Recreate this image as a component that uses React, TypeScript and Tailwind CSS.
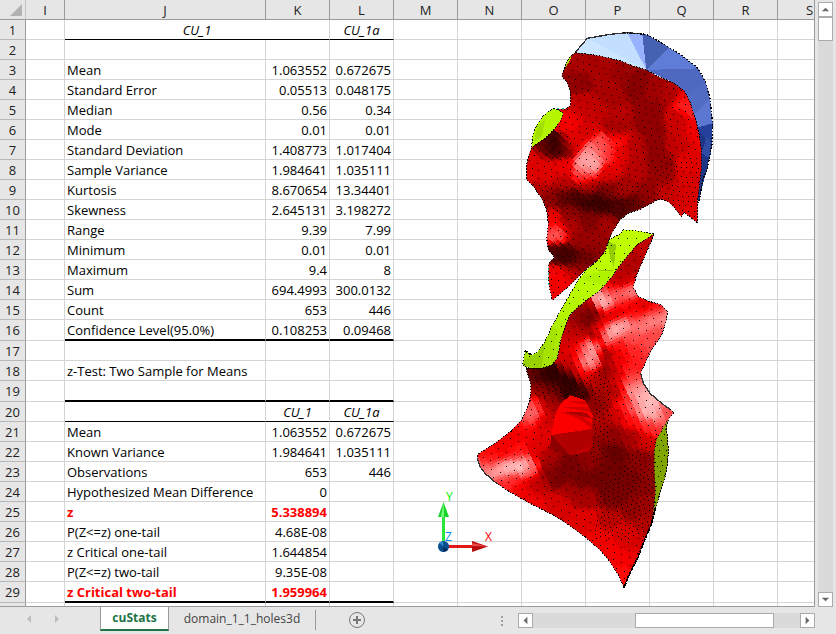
import React from "react";

type Sample = [number, number, number];
type Pt = [number, number];

const columns = ["I", "J", "K", "L", "M", "N", "O", "P", "Q", "R", "S"];

interface Row {
  label?: string;
  k?: string;
  l?: string;
  kind?: "title" | "head" | "hot";
  line?: "thin" | "thick";
}

const rows: Row[] = [
  { k: "CU_1", l: "CU_1a", kind: "title", line: "thin" },
  {},
  { label: "Mean", k: "1.063552", l: "0.672675" },
  { label: "Standard Error", k: "0.05513", l: "0.048175" },
  { label: "Median", k: "0.56", l: "0.34" },
  { label: "Mode", k: "0.01", l: "0.01" },
  { label: "Standard Deviation", k: "1.408773", l: "1.017404" },
  { label: "Sample Variance", k: "1.984641", l: "1.035111" },
  { label: "Kurtosis", k: "8.670654", l: "13.34401" },
  { label: "Skewness", k: "2.645131", l: "3.198272" },
  { label: "Range", k: "9.39", l: "7.99" },
  { label: "Minimum", k: "0.01", l: "0.01" },
  { label: "Maximum", k: "9.4", l: "8" },
  { label: "Sum", k: "694.4993", l: "300.0132" },
  { label: "Count", k: "653", l: "446" },
  { label: "Confidence Level(95.0%)", k: "0.108253", l: "0.09468", line: "thick" },
  {},
  { label: "z-Test: Two Sample for Means" },
  { line: "thick" },
  { k: "CU_1", l: "CU_1a", kind: "head", line: "thin" },
  { label: "Mean", k: "1.063552", l: "0.672675" },
  { label: "Known Variance", k: "1.984641", l: "1.035111" },
  { label: "Observations", k: "653", l: "446" },
  { label: "Hypothesized Mean Difference", k: "0" },
  { label: "z", k: "5.338894", kind: "hot" },
  { label: "P(Z<=z) one-tail", k: "4.68E-08" },
  { label: "z Critical one-tail", k: "1.644854" },
  { label: "P(Z<=z) two-tail", k: "9.35E-08" },
  { label: "z Critical two-tail", k: "1.959964", kind: "hot", line: "thick" },
  {},
];

/* Surface shading: brightness samples (0 dark, 1 red, 2 highlight) spread over each body. */
const upperSamples: Sample[] = [
  [195,185,.5],[200,130,.62],[270,140,.62],[340,160,.55],[380,185,.45],[440,200,.58],[480,210,.65],[530,260,1.15],[535,225,1],
  [550,330,.95],[300,220,.6],[200,260,.75],[420,280,.5],[500,300,.78],[500,360,.75],[320,300,.68],[250,280,.75],[230,330,.85],
  [180,300,1],[320,328,.5],[320,355,1.1],[130,385,.05],[105,388,.3],[160,385,.3],[80,420,.9],[60,460,.9],[190,370,.9],[270,375,1.3],
  [250,400,1.6],[225,440,1.65],[240,425,1.75],[290,400,1.25],[330,400,.9],[430,370,.5],[430,330,.5],[440,430,.48],[550,430,.9],
  [380,440,.68],[380,380,.68],[100,470,.9],[110,440,.9],[160,440,.95],[300,460,.9],[220,470,1.2],[160,490,.7],[450,470,.55],
  [540,480,.85],[550,580,.88],[520,540,.85],[200,535,.15],[160,530,.25],[240,545,.12],[280,555,.12],[320,563,.18],[350,572,.22],[380,565,.3],
  [120,535,.5],[300,510,.4],[420,530,.5],[470,520,.75],[330,500,.6],[230,500,.6],[90,500,.65],[140,640,1.35],[125,600,.95],
  [180,620,.65],[180,580,.5],[240,600,.42],[290,610,.6],[210,660,.55],[160,710,.1],[140,700,.2],[190,715,.2],[230,720,.3],
  [260,690,.5],[270,650,.55],[140,760,1],[130,820,1],[170,790,1],[190,760,.7],[220,740,.5],
];

const lowerSamples: Sample[] = [
  [530,90,.72],[480,130,.65],[440,180,.72],[470,180,.75],[395,245,1.8],[410,235,1.75],[480,213,1.6],[440,226,1.5],[420,210,1],[455,250,1.1],
  [350,265,.6],[370,290,.25],[355,285,.35],[330,300,.5],[310,330,.7],[300,350,.75],[440,275,.9],[490,255,.95],[520,255,.9],[560,270,1.05],
  [580,290,1.65],[550,300,1.6],[510,310,1.55],[420,335,1.85],[410,350,1.6],[460,322,1.7],[500,285,1.05],[390,320,1],[400,295,.9],[560,335,1.3],
  [530,370,1.3],[480,350,1.3],[440,375,1.05],[500,400,1.15],[450,420,.95],[480,440,1.1],[480,480,1.3],[400,400,.55],[382,350,.5],
  [310,380,.95],[290,400,.85],[368,385,1.75],[362,405,1.75],[355,430,1.6],[335,400,1.2],[300,440,.75],[345,460,.95],[280,470,.05],[240,470,.05],
  [210,465,.15],[300,495,.05],[180,460,.3],[330,515,.15],[250,500,.25],[210,510,.5],[230,530,.5],[410,460,.55],[370,480,.7],[400,510,.6],[430,520,.7],
  [440,470,.85],[195,555,1.2],[195,575,1.6],[178,595,1.4],[225,560,.65],[220,600,.8],[210,625,.9],[165,625,1],[120,650,1],[60,700,1.02],[100,700,1],
  [40,750,1.4],[60,755,1.75],[150,735,1.95],[120,740,1.85],[90,750,1.75],[180,745,1.4],[140,705,1.05],[200,690,.9],[230,720,.6],[90,790,1.15],[60,725,1.1],
  [130,775,1.2],[150,800,.98],[200,790,.75],[180,840,.95],[240,760,.45],[270,770,.38],[300,740,.4],[330,780,.35],[370,720,.5],[400,790,.33],[400,740,.35],[440,700,.3],[440,750,.35],
  [430,640,.5],[400,600,.6],[385,550,.5],[440,590,.8],[480,600,1.05],[460,550,1.1],[515,540,1.8],[495,510,1.65],[530,565,1.8],[555,580,1.75],[590,580,1.3],
  [490,560,1.4],[540,620,1.2],[520,660,.8],[480,660,.6],[500,720,.45],[540,740,.5],[480,780,.38],[430,830,.4],[520,800,.45],[350,830,.6],[300,810,.6],
  [270,850,.85],[350,900,.9],[420,900,.68],[500,870,.5],[530,850,.55],[400,960,.98],[430,1000,1],[460,1060,1.05],[480,960,.85],[520,900,.65],[450,940,.85],[470,1020,.98],
];

function levelAt(samples: Sample[], x: number, y: number) {
  let sum = 0;
  let total = 0;
  for (const [sx, sy, v] of samples) {
    const d = (sx - x) ** 2 + (sy - y) ** 2;
    const w = Math.exp(-d / 520) + 900 / (d + 500) ** 2;
    sum += v * w;
    total += w;
  }
  return sum / total;
}

function shade(level: number) {
  if (level <= 1) return `rgb(${Math.round(30 + 215 * Math.pow(level, 0.9))},0,0)`;
  const c = Math.round((level - 1) * 230);
  return `rgb(255,${c},${c})`;
}

/* Slanted facets are grouped by tone so each tone is a single path. */
function buildFacets(samples: Sample[], w: number, h: number, angle: number, long: number, short: number) {
  const tones = new Map<number, string>();
  const cos = Math.cos(angle);
  const sin = Math.sin(angle);
  const reach = Math.hypot(w, h) / 2 + 30;
  const place = (u: number, v: number): Pt => [w / 2 + u * cos - v * sin, h / 2 + u * sin + v * cos];
  for (let v = -reach; v < reach; v += short) {
    for (let u = -reach; u < reach; u += long) {
      const [cx, cy] = place(u + long / 2, v + short / 2);
      if (cx < -20 || cy < -20 || cx > w + 20 || cy > h + 20) continue;
      const tone = Math.round(Math.max(0, levelAt(samples, cx, cy)) * 26);
      const corners = [place(u, v), place(u + long + 1, v), place(u + long + 1, v + short + 1), place(u, v + short + 1)];
      const d = "M" + corners.map(([x, y]) => `${Math.round(x)} ${Math.round(y)}`).join("L") + "Z";
      tones.set(tone, (tones.get(tone) ?? "") + d);
    }
  }
  return [...tones.entries()];
}

function buildDots(w: number, h: number, angle: number, keep: (x: number, y: number) => boolean, gap: number) {
  let d = "";
  const cos = Math.cos(angle);
  const sin = Math.sin(angle);
  const n = Math.ceil(Math.hypot(w, h) / gap);
  for (let j = -n; j < n; j++) {
    for (let i = -n; i < n; i++) {
      const u = i * gap + (j % 2) * gap * 0.5 + Math.sin(j * 1.7 + i * 0.6) * 3;
      const v = j * gap * 0.85 + Math.sin(i * 0.7) * 4;
      const x = Math.round((w / 2 + u * cos - v * sin) / 3) * 3;
      const y = Math.round((h / 2 + u * sin + v * cos) / 3) * 3;
      if (x > 0 && y > 0 && x < w && y < h && keep(x, y)) d += `M${x} ${y}h3v3h-3z`;
    }
  }
  return d;
}

const upperOutline =
  "M195 98L232 102L270 108L330 122L370 138L410 150L445 170L490 188L522 212L540 245L556 295L568 345L574 390L575 440L570 480L563 540L562 608L545 595L522 577L514 590L495 565L475 545L455 538L440 541L420 552L390 568L355 580L332 598L310 630L297 660L287 690L270 715L235 742L205 770L180 795L150 822L127 840L118 800L115 750L117 728L134 712L115 690L110 663L115 610L110 570L95 535L72 502L50 478L49 440L55 410L65 380L100 330L158 280L145 268L165 268L183 255L180 210L170 185L155 168L165 140L178 112Z";

const lowerOutline =
  "M552 42L500 75L475 105L450 135L430 165L405 195L385 215L350 240L320 265L300 285L285 320L275 350L268 385L262 415L245 435L215 445L168 445L182 490L183 520L175 555L155 600L120 635L75 670L25 702L22 715L30 740L45 760L70 783L110 810L170 845L250 885L300 917L350 955L390 990L420 1025L445 1065L462 1102L475 1070L500 1020L520 970L545 910L556 865L570 820L585 770L593 730L595 690L590 630L592 602L612 577L575 550L540 520L520 490L512 460L525 430L545 390L575 345L590 300L592 275L575 255L535 243L505 230L490 200L500 165L515 130L530 95L548 55Z";

const greenBand =
  "M552 42L500 32L460 30L450 42L418 58L405 95L380 125L345 152L325 180L300 222L270 275L245 320L225 365L200 398L185 405L165 392L158 437L185 447L215 447L245 437L262 415L268 385L275 350L285 320L300 285L320 265L350 240L385 215L405 195L430 165L450 135L475 105L500 75Z";

const upperFacets = buildFacets(upperSamples, 620, 850, -0.85, 15, 9);
const lowerFacets = buildFacets(lowerSamples, 620, 1110, -0.42, 18, 8);
const inUpperDense = (x: number, y: number) => (y > 490 && y < 580 && x < 400) || (y > 690 && y < 740) || (x > 440 && y > 400);
const inLowerDense = (x: number, y: number) =>
  (x > 370 && x < 560 && y > 640 && y < 960 && x > 700 - (y - 460) * 0.9) ||
  (x > 190 && x < 380 && y > 470 && y < 530) ||
  (x > 365 && x < 415 && y > 440 && y < 720);
const upperDots =
  buildDots(620, 850, 0.3, (x, y) => !inUpperDense(x, y), 22) + buildDots(620, 850, 0.2, inUpperDense, 17);
const lowerDots =
  buildDots(620, 1110, 0.45, (x, y) => !inLowerDense(x, y), 25) + buildDots(620, 1110, -0.5, inLowerDense, 15);
const limeDots = buildDots(620, 460, 0.1, () => true, 28);
const stripDots = buildDots(620, 1110, 0, () => true, 18);

function Surfaces() {
  return (
    <svg
      className="pointer-events-none absolute left-[430px] top-5 h-[580px] w-[300px]"
      viewBox="430 20 300 580"
      shapeRendering="crispEdges"
      role="img"
      aria-label="Domain surfaces"
    >
      <defs>
        <clipPath id="upper"><path d={upperOutline} /></clipPath>
        <clipPath id="lower"><path d={lowerOutline} /></clipPath>
        <clipPath id="band"><path d={greenBand} /></clipPath>
        <clipPath id="strip"><path d="M592 602L575 632L560 657L553 690L553 750L556 810L552 860L545 912L600 870V602Z" /></clipPath>
        <linearGradient id="lime" x1="0" y1="0" x2="0" y2="1">
          <stop offset="0" stopColor="#c0ff00" />
          <stop offset="0.5" stopColor="#b8fb00" />
          <stop offset="1" stopColor="#a2dc00" />
        </linearGradient>
      </defs>

      <g transform="translate(510 20) scale(0.333333)">
        <path fill="#c2dfff" d="M195 98L232 55L300 43L352 38L410 150L330 122L270 108Z" />
        <path fill="#cde6ff" d="M195 98L232 55L400 146L330 122L270 108Z" />
        <path fill="#99b2ff" d="M352 38L397 42L409 150Z" />
        <path fill="#4661b2" d="M397 42L412 44L477 82L409 150Z" />
        <path fill="#5f7cd6" d="M477 82L520 110L564 145L409 150Z" />
        <path fill="#5069c0" d="M564 145L586 185L530 225L490 188L409 150Z" />
        <path fill="#4f69c0" d="M564 145L586 185L537 240L500 190Z" />
        <path fill="#526cc4" d="M586 185L600 235L552 285L530 225Z" />
        <path fill="#5b77cf" d="M600 235L608 310L563 322L550 285Z" />
        <path fill="#24409a" d="M563 322L608 310L606 372L590 368L568 345Z" />
        <path fill="#1c3585" d="M566 335L606 372L592 445L582 480L566 550L560 450Z" />
        <path fill="#2f4ca5" d="M590 350L606 372L600 415L575 400Z" />
        <path fill="none" stroke="#333" strokeWidth="4" d="M195 98L232 55L300 43L352 38L397 42" />
        <path fill="none" stroke="#000" strokeWidth="4" strokeDasharray="5 5" d="M340 38L397 42L412 44L477 82L520 110L564 145L586 185L600 235L608 310L606 372L592 445L578 480L566 550" />
        <g clipPath="url(#upper)">
          {upperFacets.map(([tone, d]) => <path key={tone} d={d} fill={shade(tone / 26)} />)}
          <path d={upperDots} fill="#000" />
          <path fill="#a7e600" d="M163 145L165 125L180 105L184 112L170 138Z" />
        </g>
        <path d={upperOutline} fill="none" stroke="#000" strokeWidth="3" strokeDasharray="5 4" />
        <path fill="#b4f600" stroke="#000" strokeWidth="3" strokeDasharray="5 5" d="M65 382L68 345L80 315L100 288L120 271L135 265L160 278L150 305L130 330L105 355Z" />
        <path fill="#a3e000" d="M72 365L82 318L105 300L96 350Z" />
        <path stroke="#00c8a0" strokeWidth="3" strokeDasharray="6 9" d="M140 266H162M116 745V795" />
      </g>

      <g transform="translate(470 220) scale(0.333333)">
        <path d={greenBand} fill="url(#lime)" />
        <g clipPath="url(#band)">
          <path fill="#93cc00" d="M410 62L438 74L432 140L422 118Z" />
          <path fill="#b0f300" d="M345 165L430 150L405 195L330 180Z" />
          <path fill="#b5f500" d="M290 245L345 225L300 285L265 290Z" />
          <path fill="#99d000" d="M160 420L205 400L225 365L218 445L158 440Z" />
          <path fill="#a5e300" d="M225 365L248 320L262 330L240 440H215Z" />
          <path fill="none" stroke="#93c900" strokeWidth="3" d="M385 151H428" />
          <path d={limeDots} fill="#111" />
        </g>
        <path d={greenBand} fill="none" stroke="#000" strokeWidth="3" strokeDasharray="5 4" />
        <g clipPath="url(#lower)">
          {lowerFacets.map(([tone, d]) => <path key={tone} d={d} fill={shade(tone / 26)} />)}
          <path d={lowerDots} fill="#000" />
          <path fill="#fc0000" d="M244 645L254 590L272 550L302 526L345 540L368 585L366 632Z" />
          <path fill="#d40000" d="M290 545L345 542L356 556ZM280 562L352 560L362 576ZM272 576L330 583L368 610L366 626L325 596Z" />
          <path fill="#a80000" d="M278 575L350 578L366 596Z" />
          <path fill="#b00000" d="M244 645L366 627L368 675L356 694L300 706Z" />
          <path fill="#c00000" d="M300 706L356 694L368 675L330 690Z" />
          <path fill="#8d0000" d="M244 645L300 706L240 688Z" />
        </g>
        <g clipPath="url(#strip)">
          <path fill="#80a400" clipPath="url(#lower)" d="M540 600H610V920H540Z" />
          <path fill="#000" clipPath="url(#lower)" d={stripDots} />
        </g>
        <path fill="none" stroke="#000" strokeWidth="3" strokeDasharray="4 8" d="M592 602L575 632L560 657L553 690L553 750L556 810L552 860" />
        <path d={lowerOutline} fill="none" stroke="#000" strokeWidth="3" strokeDasharray="5 4" />
        <path fill="none" stroke="#333" strokeWidth="4" d="M22 715L30 740L45 760L82 792M512 460L520 490L540 520L575 550L600 568" />
        <path fill="none" stroke="#000" strokeWidth="5" strokeDasharray="9 3" d="M556 865L545 910L520 970L500 1020L475 1070L462 1104M165 392L185 405" />
      </g>

      <g shapeRendering="auto">
        <path stroke="#27e83a" strokeWidth="3" d="M443.500 516V542" />
        <path fill="#18d52c" d="M443.500 502L438 517H449Z" />
        <path fill="#7dff80" d="M443.500 502L441 517H444Z" />
        <path stroke="#e01818" strokeWidth="3" d="M448 546.500H473" />
        <path fill="#b80c0c" d="M488 546.500L472 541V552Z" />
        <path fill="#ed4a4a" d="M488 546.500L472 543V546Z" />
        <circle cx="443.500" cy="546.500" r="5.500" fill="#0a4f90" />
        <path fill="#2d86d1" d="M443.500 546.500L439 543L443 541Z" />
        <path fill="#06305c" d="M443.500 546.500L448 550L443 552Z" />
        <text x="446" y="501" className="fill-[#00f000] font-['Open_Sans',sans-serif] text-[12px]">Y</text>
        <text x="445" y="541" className="fill-[#0088ff] font-['Open_Sans',sans-serif] text-[12px]">Z</text>
        <text x="485" y="541" className="fill-[#f00000] font-['Open_Sans',sans-serif] text-[12px]">X</text>
      </g>
    </svg>
  );
}

function SheetRow({ row, index }: { row: Row; index: number }) {
  const { label, k, l, kind, line } = row;
  const height = line === "thick" ? "h-[21px]" : "h-5";
  const edge =
    line === "thick"
      ? "border-b-2 border-b-black"
      : line === "thin"
        ? "border-b border-b-black"
        : "border-b border-b-[#d4d4d4]";
  const tone = kind === "hot" ? "font-bold text-[#ff0000]" : "";
  const cell = "whitespace-nowrap border-r border-r-[#d4d4d4] p-0 leading-[18px]";
  const plain = `${cell} border-b border-b-[#d4d4d4]`;
  const value = kind === "title" || kind === "head" ? "text-center italic" : "pr-0.5 text-right";
  return (
    <tr className={height}>
      <th scope="row" className="border-b border-r border-b-[#b8b8b8] border-r-[#9b9b9b] bg-[#e6e6e6] p-0 text-center font-normal leading-[18px] text-[#222]">
        {index <= 29 ? index : ""}
      </th>
      <td className={plain} />
      {kind === "title" ? (
        <td colSpan={2} className={`${cell} ${edge} ${value}`}>{k}</td>
      ) : (
        <>
          <td className={`${cell} ${edge} ${tone} pl-0.5`}>{label}</td>
          <td className={`${cell} ${edge} ${tone} ${value}`}>{k}</td>
        </>
      )}
      <td className={`${cell} ${edge} ${value}`}>{l}</td>
      {columns.slice(4).map((c) => <td key={c} className={plain} />)}
    </tr>
  );
}

function Arrow({ dir, label }: { dir: "up" | "down" | "left" | "right"; label: string }) {
  const shapes = { up: "M3 9L7 5L11 9Z", down: "M3 5L7 9L11 5Z", left: "M9 3L5 7L9 11Z", right: "M5 3L9 7L5 11Z" };
  return (
    <button aria-label={label} className="size-[15px] shrink-0 border border-[#ababab] bg-white">
      <svg viewBox="0 0 14 14" className="size-full fill-[#6a6a6a]"><path d={shapes[dir]} /></svg>
    </button>
  );
}

export default function App() {
  return (
    <div className="flex h-screen flex-col overflow-hidden bg-[#e6e6e6] font-['Open_Sans','Noto_Sans',sans-serif] text-[13px] text-black">
      <div className="flex min-h-0 flex-1">
        <main className="relative min-w-0 flex-1 overflow-hidden border-b border-r border-[#9b9b9b] bg-white">
          <table className="w-[842px] table-fixed border-separate border-spacing-0">
            <colgroup>
              <col className="w-[26px]" />
              <col className="w-[39px]" />
              <col className="w-[201px]" />
              {columns.slice(2).map((c) => <col key={c} className="w-16" />)}
            </colgroup>
            <thead>
              <tr className="h-5 bg-[#e6e6e6]">
                <th aria-label="Select all" className="border-b border-r border-b-[#9b9b9b] border-r-[#c4c4c4] p-0">
                  <svg viewBox="0 0 12 12" className="ml-2.5 size-3 fill-[#b2b2b2]"><path d="M12 0V12H0Z" /></svg>
                </th>
                {columns.map((c) => (
                  <th key={c} scope="col" className="border-b border-r border-[#9b9b9b] p-0 text-center font-normal leading-[18px] text-[#222]">
                    {c}
                  </th>
                ))}
              </tr>
            </thead>
            <tbody>
              {rows.map((row, i) => <SheetRow key={i} row={row} index={i + 1} />)}
            </tbody>
          </table>
          <Surfaces />
        </main>
        <div className="flex w-[21px] shrink-0 flex-col items-center pt-0.5">
          <Arrow dir="up" label="Scroll up" />
          <div className="w-[15px] flex-1 bg-[#dadada]">
            <div className="h-6 border border-[#ababab] bg-white" />
          </div>
          <Arrow dir="down" label="Scroll down" />
        </div>
      </div>

      <footer className="flex h-[27px] shrink-0 items-start text-[12px]">
        <div className="flex h-6 w-[100px] shrink-0 items-center gap-[22px] pl-[26px]">
          <button aria-label="Previous sheet"><svg viewBox="0 0 6 8" className="h-2 w-1.5 fill-[#bdbdbd]"><path d="M5 0V8L1 4Z" /></svg></button>
          <button aria-label="Next sheet"><svg viewBox="0 0 6 8" className="h-2 w-1.5 fill-[#bdbdbd]"><path d="M1 0V8L5 4Z" /></svg></button>
        </div>
        <button className="-mt-px h-[25px] w-[69px] shrink-0 border-x border-b-2 border-x-[#9b9b9b] border-b-[#217346] bg-white font-bold leading-6 text-[#217346]">
          cuStats
        </button>
        <button className="h-6 w-[146px] shrink-0 leading-6 text-[#444]">domain_1_1_holes3d</button>
        <span className="mt-[3px] h-5 w-px bg-[#9b9b9b]" />
        <button aria-label="New sheet" className="ml-8 mt-1">
          <svg viewBox="0 0 18 18" className="size-[18px] fill-none stroke-[#777]">
            <circle cx="9" cy="9" r="7.500" />
            <path strokeWidth="2" d="M9 5V13M5 9H13" />
          </svg>
        </button>
        <div className="ml-auto mr-[21px] flex w-[314px] items-center pt-1.5">
          <div className="flex h-[15px] w-[17px] flex-col justify-center gap-0.5">
            <i className="size-0.5 bg-[#a0a0a0]" />
            <i className="size-0.5 bg-[#a0a0a0]" />
            <i className="size-0.5 bg-[#a0a0a0]" />
          </div>
          <Arrow dir="left" label="Scroll left" />
          <div className="flex h-[15px] flex-1 justify-end bg-[#dadada] pr-[26px]">
            <div className="w-[139px] border border-[#ababab] bg-white" />
          </div>
          <Arrow dir="right" label="Scroll right" />
        </div>
      </footer>
    </div>
  );
}
